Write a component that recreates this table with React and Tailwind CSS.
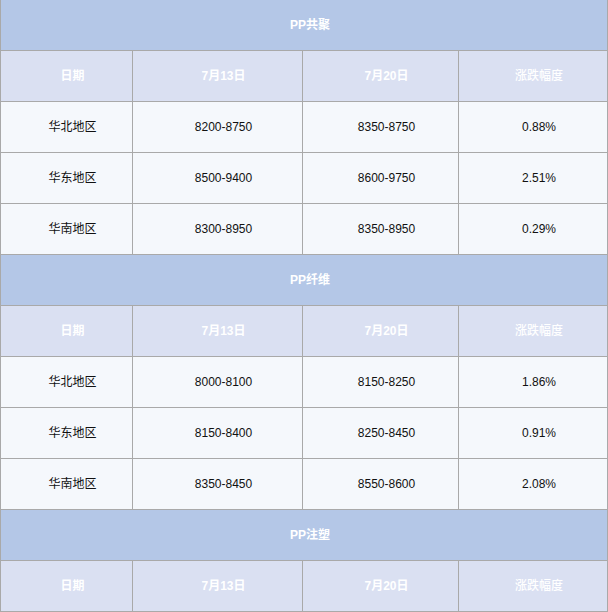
const sections = [
  {
    title: 'PP共聚',
    rows: [
      ['华北地区', '8200-8750', '8350-8750', '0.88%'],
      ['华东地区', '8500-9400', '8600-9750', '2.51%'],
      ['华南地区', '8300-8950', '8350-8950', '0.29%']
    ]
  },
  {
    title: 'PP纤维',
    rows: [
      ['华北地区', '8000-8100', '8150-8250', '1.86%'],
      ['华东地区', '8150-8400', '8250-8450', '0.91%'],
      ['华南地区', '8350-8450', '8550-8600', '2.08%']
    ]
  },
  {
    title: 'PP注塑',
    rows: []
  }
];

const headers = ['日期', '7月13日', '7月20日', '涨跌幅度'];

export default function App() {
  return (
    <div
      className="w-[608px] h-[612px] overflow-hidden bg-white"
      style={{ fontFamily: '"Liberation Sans", "Noto Sans CJK SC", sans-serif' }}
    >
      <table className="-mt-px w-[608px] border-collapse table-fixed text-[12px] text-[#111]">
        <colgroup>
          <col className="w-[132px]" />
          <col className="w-[170px]" />
          <col className="w-[156px]" />
          <col />
        </colgroup>
        <tbody>
          {sections.map((s) => (
            <Section key={s.title} section={s} />
          ))}
        </tbody>
      </table>
    </div>
  );
}

function Section({ section }) {
  return (
    <>
      <tr className="h-[51px] bg-[#b4c7e7]">
        <td colSpan={4} className="border border-[#a9a9a9] pl-3 text-center font-bold text-white">
          {section.title}
        </td>
      </tr>
      <tr className="h-[51px] bg-[#dae0f2]">
        {headers.map((h, i) => (
          <td
            key={h}
            className={`border border-[#a9a9a9] pl-3 text-center text-white ${i < 3 ? 'font-bold' : 'font-medium'}`}
          >
            {h}
          </td>
        ))}
      </tr>
      {section.rows.map((r) => (
        <tr key={r[0]} className="h-[51px] bg-[#f5f8fc]">
          {r.map((c, i) => (
            <td key={i} className="border border-[#a9a9a9] pl-3 text-center">
              {c}
            </td>
          ))}
        </tr>
      ))}
    </>
  );
}
